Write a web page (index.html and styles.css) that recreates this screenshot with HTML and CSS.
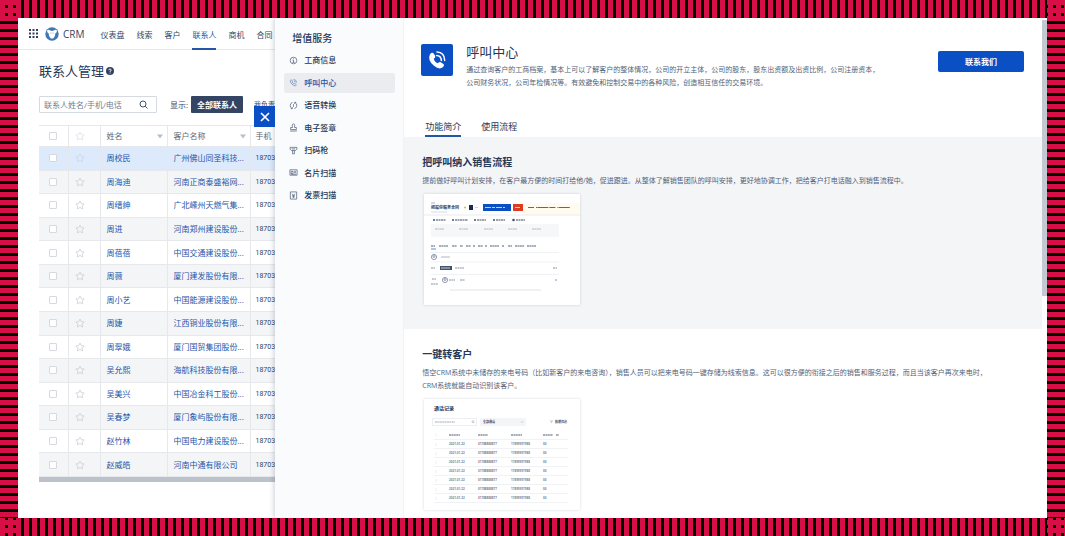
FILE: index.html
```html
<!DOCTYPE html>
<html lang="zh-CN">
<head>
<meta charset="utf-8">
<title>CRM</title>
<link rel="stylesheet" href="styles.css">
</head>
<body>
<svg class="defs" width="0" height="0" aria-hidden="true">
  <symbol id="star" viewBox="0 0 12 12"><path d="M6 1.2 7.5 4.3 11 4.8 8.5 7.2 9.1 10.7 6 9 2.9 10.7 3.5 7.2 1 4.8 4.5 4.3Z" fill="none" stroke="currentColor" stroke-linejoin="round"/></symbol>
  <symbol id="caret" viewBox="0 0 6 5"><path d="M0 .5H6L3 4.5Z" fill="currentColor"/></symbol>
</svg>
<div class="app">
  <main class="page">
    <nav class="nav">
      <svg class="grid-icon" viewBox="0 0 9 9"><path d="M0 0h2v2H0zM3.5 0h2v2h-2zM7 0h2v2H7zM0 3.5h2v2H0zM3.5 3.5h2v2h-2zM7 3.5h2v2H7zM0 7h2v2H0zM3.5 7h2v2h-2zM7 7h2v2H7z" fill="#35415c"/></svg>
      <svg class="logo" viewBox="0 0 14 14"><circle cx="7" cy="7" r="6.7" fill="#3f78b5"/><path d="M2 3.6Q3.2 2 4.8 3.2Q7 4.6 9.2 3.2Q10.800 2 12 3.600Q12.200 5.600 10.300 6.600Q10.400 10 8.400 11.200Q7 12 5.600 11.200Q3.600 10 3.700 6.600Q1.800 5.600 2 3.600Z" fill="#fff"/><path d="M5.500 5.400h.9v1.300h-.9zM7.600 5.400h.9v1.300h-.9z" fill="#8fb4da"/></svg>
      <span class="brand">CRM</span>
      <a href="#">仪表盘</a><a href="#">线索</a><a href="#">客户</a><a href="#" class="current">联系人</a><a href="#">商机</a><a href="#">合同</a>
    </nav>
    <h1 class="page-title">联系人管理
      <svg viewBox="0 0 8 8"><circle cx="4" cy="4" r="4" fill="#35415c"/><path d="M2.8 3.2Q2.9 2 4 2T5.2 3.1Q5.2 3.8 4.1 4.3V5M4.1 5.6V6.5" fill="none" stroke="#fff" stroke-width=".9"/></svg>
    </h1>
    <div class="filters">
      <label class="search"><input type="text" aria-label="搜索" placeholder="联系人姓名/手机/电话"><svg viewBox="0 0 9 9"><circle cx="4" cy="4" r="3" fill="none" stroke="#42526e"/><path d="M6.2 6.2 8.5 8.5" stroke="#42526e"/></svg></label>
      <span class="filter-label">显示:</span>
      <button class="filter active">全部联系人</button>
      <button class="filter mine">我负责</button>
    </div>
    <div class="table-wrap">
      <table class="contacts">
        <colgroup><col class="c-check"><col class="c-star"><col class="c-name"><col class="c-company"><col></colgroup>
        <thead><tr><th><input type="checkbox" aria-label="全选"></th><th><svg class="star pale"><use href="#star"/></svg></th><th><span class="th">姓名<svg><use href="#caret"/></svg></span></th><th><span class="th">客户名称<svg><use href="#caret"/></svg></span></th><th>手机</th></tr></thead>
        <tbody>
        <tr class="selected"><td><input type="checkbox" aria-label="周校民"></td><td><svg class="star"><use href="#star"/></svg></td><td><a href="#">周校民</a></td><td><a href="#">广州佛山同圣科技...</a></td><td>18703</td></tr>
        <tr><td><input type="checkbox" aria-label="周海迪"></td><td><svg class="star"><use href="#star"/></svg></td><td><a href="#">周海迪</a></td><td><a href="#">河南正商泰盛裕网...</a></td><td>18703</td></tr>
        <tr><td><input type="checkbox" aria-label="周缙绅"></td><td><svg class="star"><use href="#star"/></svg></td><td><a href="#">周缙绅</a></td><td><a href="#">广北嵊州天燃气集...</a></td><td>18703</td></tr>
        <tr><td><input type="checkbox" aria-label="周进"></td><td><svg class="star"><use href="#star"/></svg></td><td><a href="#">周进</a></td><td><a href="#">河南郑州建设股份...</a></td><td>18703</td></tr>
        <tr><td><input type="checkbox" aria-label="周蓓蓓"></td><td><svg class="star"><use href="#star"/></svg></td><td><a href="#">周蓓蓓</a></td><td><a href="#">中国交通建设股份...</a></td><td>18703</td></tr>
        <tr><td><input type="checkbox" aria-label="周薇"></td><td><svg class="star"><use href="#star"/></svg></td><td><a href="#">周薇</a></td><td><a href="#">厦门建发股份有限...</a></td><td>18703</td></tr>
        <tr><td><input type="checkbox" aria-label="周小艺"></td><td><svg class="star"><use href="#star"/></svg></td><td><a href="#">周小艺</a></td><td><a href="#">中国能源建设股份...</a></td><td>18703</td></tr>
        <tr><td><input type="checkbox" aria-label="周婕"></td><td><svg class="star"><use href="#star"/></svg></td><td><a href="#">周婕</a></td><td><a href="#">江西铜业股份有限...</a></td><td>18703</td></tr>
        <tr><td><input type="checkbox" aria-label="周翠娥"></td><td><svg class="star"><use href="#star"/></svg></td><td><a href="#">周翠娥</a></td><td><a href="#">厦门国贸集团股份...</a></td><td>18703</td></tr>
        <tr><td><input type="checkbox" aria-label="吴允熙"></td><td><svg class="star"><use href="#star"/></svg></td><td><a href="#">吴允熙</a></td><td><a href="#">海航科技股份有限...</a></td><td>18703</td></tr>
        <tr><td><input type="checkbox" aria-label="吴美兴"></td><td><svg class="star"><use href="#star"/></svg></td><td><a href="#">吴美兴</a></td><td><a href="#">中国冶金科工股份...</a></td><td>18703</td></tr>
        <tr><td><input type="checkbox" aria-label="吴春梦"></td><td><svg class="star"><use href="#star"/></svg></td><td><a href="#">吴春梦</a></td><td><a href="#">厦门象屿股份有限...</a></td><td>18703</td></tr>
        <tr><td><input type="checkbox" aria-label="赵竹林"></td><td><svg class="star"><use href="#star"/></svg></td><td><a href="#">赵竹林</a></td><td><a href="#">中国电力建设股份...</a></td><td>18703</td></tr>
        <tr><td><input type="checkbox" aria-label="赵威皓"></td><td><svg class="star"><use href="#star"/></svg></td><td><a href="#">赵威皓</a></td><td><a href="#">河南中通有限公司</a></td><td>18703</td></tr>
        </tbody>
      </table>
      <div class="h-scroll"></div>
    </div>
  </main>

  <section class="drawer">
    <button class="close" aria-label="关闭"><svg viewBox="0 0 10 10"><path d="M1 1 9 9M9 1 1 9" stroke="#fff" stroke-width="1.7"/></svg></button>
    <aside class="side">
      <h2>增值服务</h2>
      <ul>
        <li><a href="#"><svg viewBox="0 0 10 10"><circle cx="5" cy="5" r="3.7"/><path d="M5 2.7V3.7M4 4.6H5V7M3.8 7H6.3"/></svg>工商信息</a></li>
        <li><a href="#" class="current"><svg viewBox="0 0 10 10"><path d="M2.4 1.8 1.5 2.8Q1.5 5 3.2 6.8T7 8.7L8.2 7.6 6.5 6 5.5 6.6Q4 5.7 3.4 4.4L4 3.5ZM5 1.6Q8.4 1.8 8.5 5.2M5.2 3.2Q6.9 3.5 7 5"/></svg>呼叫中心</a></li>
        <li><a href="#"><svg viewBox="0 0 10 10"><path d="M4 1.5A3.7 3.7 0 0 0 3.5 8.4M2 8.5H3.7V6.8M6 8.5A3.7 3.7 0 0 0 6.5 1.6M8 1.5H6.3V3.2M5 3.5V6.5"/></svg>语音转换</a></li>
        <li><a href="#"><svg viewBox="0 0 10 10"><path d="M3.9 5 3.6 2.6Q3.7 1 5 1T6.4 2.6L6.1 5H8.2V7.3H1.8V5ZM1.2 8.9H8.8"/></svg>电子签章</a></li>
        <li><a href="#"><svg viewBox="0 0 10 10"><path d="M1.2 1.5H8.8V3.5L7.3 5H2.7L1.2 3.5ZM3 3.2H7M4 5V8.7H6V5"/></svg>扫码枪</a></li>
        <li><a href="#"><svg viewBox="0 0 10 10"><path d="M1 2H9V8H1ZM2.4 3.7H4.5V6.2H2.4ZM5.7 3.8H7.8M5.7 5.2H7.8M2.4 7H7.8"/></svg>名片扫描</a></li>
        <li><a href="#"><svg viewBox="0 0 10 10"><path d="M1.5 1H8.5V9H1.5ZM3.3 3 5 4.8 6.7 3M5 4.8V7.5M3.5 5.2H6.5M3.5 6.6H6.5"/></svg>发票扫描</a></li>
      </ul>
    </aside>
    <div class="detail">
      <div class="scroll-thumb"></div>
      <header class="hero">
        <svg class="hero-icon" viewBox="0 0 32 32"><rect width="32" height="32" rx="2" fill="#0a4fc4"/><path d="M9 10.2Q11 7.7 12.7 9.4L14.2 12Q14.8 13.4 12.8 14.8Q13.4 18 16.8 19.3Q18.5 17.7 19.7 18.2L22.8 20.2Q23.8 21.8 21.4 23.6Q18.2 25.8 13 21.8Q6 16 9 10.2Z" fill="#fff"/><path d="M15.5 11.4Q20.2 11.6 20.4 16.6M16 8Q23.4 8.2 23.7 16.4" fill="none" stroke="#fff" stroke-width="1.5" stroke-linecap="round"/></svg>
        <div class="hero-text">
          <h2>呼叫中心</h2>
          <p>通过查询客户的工商档案，基本上可以了解客户的整体情况，公司的开立主体，公司的股东，股东出资额及出资比例，公司注册资本，<br>公司财务状况，公司年检情况等。有效避免和控制交易中的各种风险，创造相互信任的交易环境。</p>
        </div>
        <button class="contact">联系我们</button>
      </header>
      <nav class="tabs"><a href="#" class="current">功能简介</a><a href="#">使用流程</a></nav>
      <section class="feature tinted">
        <h3>把呼叫纳入销售流程</h3>
        <p>提前做好呼叫计划安排，在客户最方便的时间打给他/她，促进跟进。从整体了解销售团队的呼叫安排，更好地协调工作，把给客户打电话融入到销售流程中。</p>
        <svg class="shot" viewBox="0 0 156 111">
          <rect x="99" y="9" width="57" height="12" fill="#fffcef"/><path d="M0 21H156" stroke="#e9ebef"/>
          <path d="M7 9h4" stroke="#aeb5c2"/><text x="7" y="15" font-size="4" font-weight="700" fill="#35415c">把握你服务合同</text><path d="M7 18h16" stroke="#d3dced"/>
          <circle cx="41" cy="13.5" r="1.1" fill="#f2b84e"/><rect x="45" y="11" width="4" height="5" fill="#172b4d"/><path d="M51 13.5h3" stroke="#cdd2da"/>
          <rect x="59" y="10" width="28" height="7" fill="#0a4fc4"/><path d="M61 13.5h20" stroke="#b9cff4" stroke-dasharray="6 1 3 1"/><rect x="89" y="10" width="10" height="7" fill="#de3b21"/><path d="M91 13.5h5" stroke="#f6c4ba"/>
          <path d="M104 13.5h42" stroke="#6a675f" stroke-dasharray="6 2 1 0.4 11 1"/>
          <g fill="#42526e"><circle cx="10" cy="26" r="1"/><circle cx="29" cy="26" r="1"/><circle cx="51" cy="26" r="1"/><circle cx="70" cy="26" r="1"/><circle cx="89.500" cy="26" r="1.300"/></g>
          <path d="M12 26h10M31 26h13M53 26h9M72 26h9M92 26h9" stroke="#7b8496" stroke-width="1.500" stroke-dasharray="2 .5"/>
          <rect x="7" y="30" width="128" height="13" fill="#f6f7f9"/><path d="M11 35h9M35 35h9M60 35h9M84 35h9M108 35h9" stroke="#b0b6c2" stroke-dasharray="2 .4"/>
          <path d="M7 52h4M15 52h9M28 52h5M36 52h3M42 52h5M49 52h2M54 52h5M61 52h2M66 52h9M78 52h2M84 52h4M91 52h9M103 52h9" stroke="#8a93a3" stroke-width="1.300" stroke-dasharray="2 .4"/><path d="M7 55h5" stroke="#5b8be0"/>
          <path d="M7 58.500h128M7 68h128M7 80.500h128" stroke="#eff1f4"/>
          <g fill="#fff" stroke="#68758d" stroke-width=".7"><circle cx="10" cy="63" r="2.600"/><circle cx="10" cy="62.500" r="1"/><circle cx="21" cy="86" r="2.600"/><circle cx="21" cy="85.500" r="1"/></g>
          <path d="M17 63h9" stroke="#b0b6c2"/><path d="M7 74h4M31 74h9M129 74h4M25 86h6M36 86h5M8 85h4M7 90h7M131 86h2" stroke="#8a93a3" stroke-dasharray="2 .4"/><rect x="16" y="72" width="12" height="4" fill="#42526e"/><path d="M17 74h9" stroke="#c7ccd6"/>
          <rect x="26" y="95" width="91" height="2" fill="#f0f1f4"/>
        </svg>
      </section>
      <section class="feature">
        <h3>一键转客户</h3>
        <p>悟空CRM系统中未储存的来电号码（比如新客户的来电咨询），销售人员可以把来电号码一键存储为线索信息。这可以很方便的衔接之后的销售和服务过程，而且当该客户再次来电时，<br>CRM系统就能自动识别该客户。</p>
        <svg class="shot" viewBox="0 0 156 111">
          <text x="10" y="11" font-size="5" font-weight="700" fill="#253858">通话记录</text>
          <rect x="8.500" y="19.500" width="44" height="7" fill="#fff" stroke="#eceef1"/><path d="M11 23h20" stroke="#a7aebb" stroke-dasharray="2 .4"/><circle cx="49" cy="22.700" r="1" fill="none" stroke="#8993a4" stroke-width=".5"/>
          <rect x="56" y="19" width="46" height="8" fill="#f4f5f7"/><text x="59" y="24" font-size="3" font-weight="700" fill="#35415c">全部通话</text><path d="M97 22.500l1 1 1-1" fill="none" stroke="#8993a4" stroke-width=".5"/>
          <text x="131" y="24" font-size="3" font-weight="700" fill="#42526e">数据筛选</text><path d="M126 22h3M127 23.500h1" stroke="#8993a4" stroke-width=".6"/>
          <path d="M25 36h11M54 36h10M87 36h11M119 36h10M132 36h3" stroke="#8a93a3" stroke-width="1.300" stroke-dasharray="2 .4"/>
          <path d="M10 40.500h134M10 49.500h134M10 58.500h134M10 67.500h134M10 76.500h134M10 85.500h134M10 94.500h134M10 103.500h134" stroke="#f1f2f5"/>
          <g font-size="3" font-weight="700" fill="#7a8394">
          <text x="25" y="46">2021-01-22</text><text x="54" y="46">01788888877</text><text x="87" y="46">17899997988</text><text x="119" y="46">00</text>
          <text x="25" y="55">2021-01-22</text><text x="54" y="55">01788888877</text><text x="87" y="55">17899997988</text><text x="119" y="55">00</text>
          <text x="25" y="64">2021-01-22</text><text x="54" y="64">01788888877</text><text x="87" y="64">17899997988</text><text x="119" y="64">00</text>
          <text x="25" y="73">2021-01-22</text><text x="54" y="73">01788888877</text><text x="87" y="73">17899997988</text><text x="119" y="73">00</text>
          <text x="25" y="82">2021-01-22</text><text x="54" y="82">01788888877</text><text x="87" y="82">17899997988</text><text x="119" y="82">00</text>
          <text x="25" y="91">2021-01-22</text><text x="54" y="91">01788888877</text><text x="87" y="91">17899997988</text><text x="119" y="91">00</text>
          <text x="25" y="100">2021-01-22</text><text x="54" y="100">01788888877</text><text x="87" y="100">17899997988</text><text x="119" y="100">00</text>
          </g>
          <path d="M12 34.500v3M12 44v3M12 53v3M12 62v3M12 71v3M12 80v3M12 89v3M12 98v3" stroke="#eceef1"/>
        </svg>
      </section>
    </div>
  </section>
</div>
</body>
</html>
```
FILE: styles.css
```css
* { box-sizing: border-box; }
html, body { height: 100%; }
body {
  margin: 0;
  padding: 18px;
  color: #344563;
  font-family: "Open Sans", "Noto Sans CJK SC", sans-serif;
  font-size: 8px;
  line-height: 12px;
  background:
    repeating-linear-gradient(to right, #d80f47 0 5px, transparent 5px 8px) top / 100% 18px no-repeat,
    repeating-linear-gradient(to right, #d80f47 0 5px, transparent 5px 8px) bottom / 100% 18px no-repeat,
    repeating-linear-gradient(to bottom, #d80f47 0 5px, transparent 5px 8px) left / 18px 100% no-repeat,
    repeating-linear-gradient(to bottom, #d80f47 0 5px, transparent 5px 8px) right / 18px 100% no-repeat,
    #000;
}
h1, h2, h3, p, ul { margin: 0; padding: 0; font-weight: 500; }
ul { list-style: none; }
a { color: inherit; text-decoration: none; }
button, input { margin: 0; padding: 0; border: 0; font: inherit; color: inherit; background: none; }
svg { flex: none; display: block; }
.defs { position: absolute; }

.app { display: flex; height: 100%; overflow: hidden; background: #fff; }
.page { flex: 1; min-width: 0; overflow: hidden; background: #fff; }

.nav { display: flex; align-items: center; height: 32px; padding-left: 11px; border-bottom: 1px solid #e4e7ec; white-space: nowrap; }
.grid-icon { width: 9px; height: 9px; }
.logo { width: 14px; height: 14px; margin-left: 7px; }
.brand { margin: 0 16px 0 4px; font-size: 10px; }
.nav a { height: 32px; margin-right: 12px; padding-top: 1px; line-height: 32px; }
.nav .current { color: #2456a8; border-bottom: 2px solid #2456a8; }
.nav a:last-child { margin-right: 0; }

.page-title { display: flex; align-items: center; gap: 2px; padding: 11px 0 0 21px; font-size: 13px; line-height: 20px; color: #253858; font-weight: 400; }
.page-title svg { width: 8px; height: 8px; }

.filters { display: flex; align-items: center; padding: 15px 0 0 21px; white-space: nowrap; }
.search { display: flex; align-items: center; width: 118px; height: 17px; padding: 0 8px 0 4px; border: 1px solid #d5d9e0; border-radius: 1px; flex: none; }
.search input { flex: 1; min-width: 0; outline: 0; }
.search input::placeholder { color: #737e91; opacity: 1; }
.search svg { width: 9px; height: 9px; }
.filter-label { width: 21px; margin-left: 13px; flex: none; }
.filter { height: 17px; padding: 0; flex: none; }
.filter.active { padding: 0 6px; margin-right: 11px; color: #fff; background: #344563; font-weight: 700; border-radius: 1px; }
.filter.mine { font-size: 7px; }

.table-wrap { margin: 12px 0 0 21px; }
.contacts { width: 100%; height: 352px; table-layout: fixed; border-collapse: collapse; }
.c-check { width: 29px; }
.c-star { width: 32px; }
.c-name { width: 67px; }
.c-company { width: 83px; }
.contacts th, .contacts td { padding: 0 0 0 6px; border: 1px solid #e6e8ec; text-align: left; white-space: nowrap; font-weight: 400; }
.contacts th:first-child, .contacts td:first-child { padding-left: 10px; border-left: 0; }
.contacts th:last-child, .contacts td:last-child { padding-left: 5px; border-right: 0; }
.contacts td:last-child { font-family: Roboto, "Open Sans", sans-serif; font-size: 7px; }
.contacts thead tr { height: 21px; color: #5e6778; }
.contacts tbody tr:nth-child(even) { background: #f4f5f7; }
.contacts tbody .selected { background: #dceafc; }
.contacts a { color: #2456a8; }
.contacts input { display: block; appearance: none; width: 8px; height: 8px; border: 1px solid #d5d9e0; border-radius: 1px; background: #fff; }
.star { width: 10px; height: 10px; color: #ccd0d7; }
.selected .star, .star.pale { color: #dfe2e7; }
.selected .star { color: #cbd9ec; }
.th { display: flex; align-items: center; justify-content: space-between; padding-right: 4px; }
.th svg { width: 6px; height: 5px; color: #b9bec8; }
.h-scroll { height: 5px; background: #bcc2cb; }

.drawer { position: relative; display: flex; width: 75%; flex: none; background: #fff; box-shadow: -1px 0 5px rgba(23, 43, 77, .22); }
.close { position: absolute; top: 88px; left: -21px; display: grid; place-items: center; width: 21px; height: 21px; background: #0a4fc4; }
.close svg { width: 10px; height: 10px; }

.side { width: 129px; flex: none; padding: 13px 8px 0 9px; background: #fafbfc; border-right: 1px solid #f2f3f5; color: #253858; }
.side h2 { padding-left: 8px; font-size: 10px; line-height: 14px; }
.side ul { display: flex; flex-direction: column; justify-content: space-between; min-height: 155px; margin-top: 5px; }
.side li a { display: flex; align-items: center; gap: 6px; height: 20px; padding-left: 5px; border-radius: 2px; font-weight: 500; }
.side svg { width: 9px; height: 9px; fill: none; stroke: #505f79; stroke-width: .8; }
.side .current { color: #2456a8; background: #ebecf0; }
.side .current svg { stroke: #6b86b5; }

.detail { position: relative; flex: 1; min-width: 0; padding-right: 5px; overflow: hidden; }
.scroll-thumb { position: absolute; top: 2px; right: 0; width: 5px; height: 276px; background: #c3c8d1; }
.hero { display: flex; align-items: flex-start; padding: 26px 18px 0 17px; }
.hero-icon { width: 32px; height: 32px; }
.hero-text { flex: 1; min-width: 0; margin-left: 13px; }
.hero-text h2 { font-size: 13px; line-height: 16px; color: #253858; font-weight: 400; }
.hero-text p, .feature p { font-size: 7px; line-height: 13px; color: #505f79; font-weight: 400; }
.hero-text p { margin-top: 3px; }
.contact { width: 86px; height: 21px; margin-top: 7px; flex: none; color: #fff; background: #0a4fc4; border-radius: 2px; font-weight: 700; }
.tabs { display: flex; gap: 20px; padding: 0 21px; margin-top: 28px; font-size: 9px; line-height: 20px; color: #253858; }
.tabs a { height: 20px; }
.tabs .current { border-bottom: 2px solid #2456a8; }
.feature { padding: 18px 14px 24px 18px; }
.feature.tinted { background: #f4f5f7; }
.feature h3 { font-size: 10px; line-height: 14px; color: #253858; font-weight: 700; }
.feature p { margin-top: 5px; }
.shot { width: 156px; height: 111px; margin: 7px 0 0 2px; background: #fff; border-radius: 1px; box-shadow: 0 0 3px rgba(23, 43, 77, .18); }
```
